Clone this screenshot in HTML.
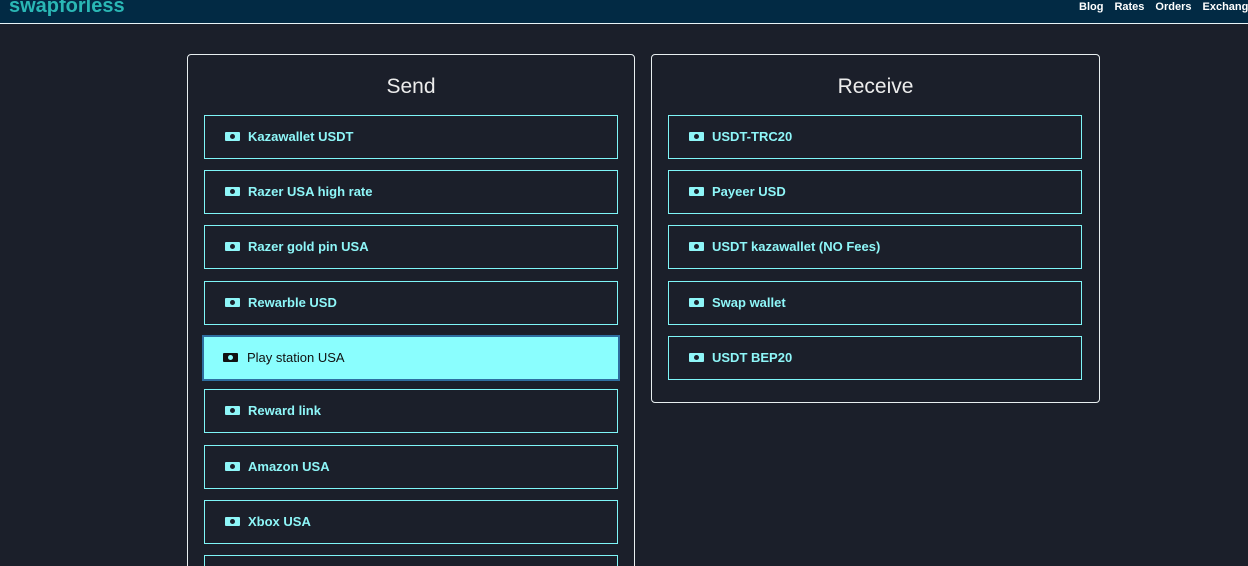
<!DOCTYPE html>
<html><head><style>
*{box-sizing:border-box;margin:0;padding:0}
html,body{width:1248px;height:566px;overflow:hidden}
body{background:#1b1f2a;font-family:"Liberation Sans",sans-serif;position:relative}
.hdr{position:absolute;left:0;top:0;width:1248px;height:24px;background:#022a44;border-bottom:1px solid #e8f4f8}
.logo{position:absolute;left:9px;top:-5px;color:#2ab7b5;font-weight:bold;font-size:20px}
.nav{position:absolute;top:1px;left:1079px;color:#fff;font-weight:bold;font-size:11px;white-space:nowrap}
.nav span{margin-right:11px}
.card{position:absolute;border:1px solid #e8eef0;border-radius:4px;background:#1b1f2a}
.card h2{position:absolute;top:20px;left:0;right:0;text-align:center;color:#ececec;font-weight:normal;font-size:21px}
.item{position:absolute;left:16px;width:414px;height:44px;border:1px solid #7ef5f7;color:#8ef6f8;font-weight:bold;font-size:13px;line-height:42px;padding-left:43px}
.item i{position:absolute;left:20px;top:16px;width:15px;height:9px;background:#8ef6f8;border-radius:1px}
.item i:after{content:"";position:absolute;left:5px;top:2px;width:5px;height:5px;border-radius:50%;background:#1b1f2a}
.item.act{left:14px;width:418px;height:46px;background:#8afefe;border:2px solid #2e6ea0;color:#111;font-weight:normal;padding-left:43px}
.item.act i{background:#111;left:19px}
.item.act i:after{background:#8afefe}
</style></head><body>
<div class="hdr"><div class="logo">swapforless</div><div class="nav"><span>Blog</span><span>Rates</span><span>Orders</span><span>Exchange</span></div></div>
<div class="card" style="left:187px;top:54px;width:448px;height:540px"><h2>Send</h2>
<div class="item" style="top:60px"><i></i>Kazawallet USDT</div>
<div class="item" style="top:115px"><i></i>Razer USA high rate</div>
<div class="item" style="top:170px"><i></i>Razer gold pin USA</div>
<div class="item" style="top:226px"><i></i>Rewarble USD</div>
<div class="item act" style="top:280px"><i></i>Play station USA</div>
<div class="item" style="top:334px"><i></i>Reward link</div>
<div class="item" style="top:390px"><i></i>Amazon USA</div>
<div class="item" style="top:445px"><i></i>Xbox USA</div>
<div class="item" style="top:500px"></div>
</div>
<div class="card" style="left:651px;top:54px;width:449px;height:349px"><h2>Receive</h2>
<div class="item" style="top:60px"><i></i>USDT-TRC20</div>
<div class="item" style="top:115px"><i></i>Payeer USD</div>
<div class="item" style="top:170px"><i></i>USDT kazawallet (NO Fees)</div>
<div class="item" style="top:226px"><i></i>Swap wallet</div>
<div class="item" style="top:281px"><i></i>USDT BEP20</div>
</div>
</body></html>
